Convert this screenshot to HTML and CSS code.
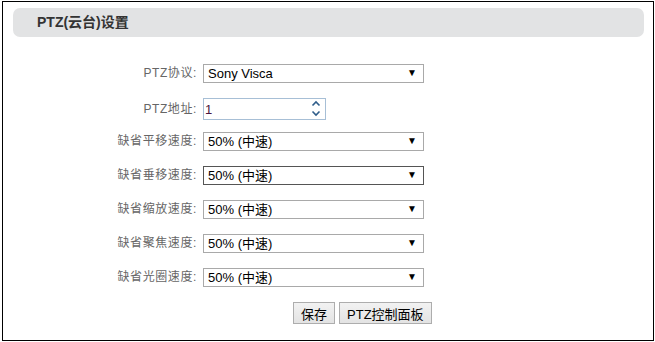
FILE: index.html
```html
<!DOCTYPE html>
<html>
<head>
    <title>PTZ(云台)设置</title>
    <link rel="stylesheet" href="styles.css">
</head>
<body>
    <div class="frame">
        <div class="title-bar">PTZ(云台)设置</div>
        <div class="form">
            <div class="row">
                <label class="label">PTZ协议:</label>
                <div class="select-wrap">
                    <select class="select"><option>Sony Visca</option></select>
                    <span class="arrow">▼</span>
                </div>
            </div>
            <div class="row row-input">
                <label class="label">PTZ地址:</label>
                <div class="spin-wrap">
                    <input class="spin-input" type="text" value="1">
                    <span class="spin">
                        <svg width="10" height="7" viewBox="0 0 10 7"><path d="M1.5 5.5 L5 2 L8.5 5.5" fill="none" stroke="#2f5d8a" stroke-width="1.6"/></svg>
                        <svg width="10" height="7" viewBox="0 0 10 7"><path d="M1.5 1.5 L5 5 L8.5 1.5" fill="none" stroke="#2f5d8a" stroke-width="1.6"/></svg>
                    </span>
                </div>
            </div>
            <div class="row">
                <label class="label">缺省平移速度:</label>
                <div class="select-wrap">
                    <select class="select"><option>50% (中速)</option></select>
                    <span class="arrow">▼</span>
                </div>
            </div>
            <div class="row">
                <label class="label">缺省垂移速度:</label>
                <div class="select-wrap">
                    <select class="select select-focus"><option>50% (中速)</option></select>
                    <span class="arrow">▼</span>
                </div>
            </div>
            <div class="row">
                <label class="label">缺省缩放速度:</label>
                <div class="select-wrap">
                    <select class="select"><option>50% (中速)</option></select>
                    <span class="arrow">▼</span>
                </div>
            </div>
            <div class="row">
                <label class="label">缺省聚焦速度:</label>
                <div class="select-wrap">
                    <select class="select"><option>50% (中速)</option></select>
                    <span class="arrow">▼</span>
                </div>
            </div>
            <div class="row">
                <label class="label">缺省光圈速度:</label>
                <div class="select-wrap">
                    <select class="select"><option>50% (中速)</option></select>
                    <span class="arrow">▼</span>
                </div>
            </div>
            <div class="buttons">
                <button class="button">保存</button>
                <button class="button">PTZ控制面板</button>
            </div>
        </div>
    </div>
</body>
</html>
```

FILE: styles.css
```css
body {
    margin: 0;
    background-color: #fff;
    font-family: "Liberation Sans", "Noto Sans CJK SC", sans-serif;
}
.frame {
    box-sizing: border-box;
    width: 652px;
    height: 340px;
    margin: 1px 0 0 2px;
    border: 1px solid #000;
}
.title-bar {
    height: 29px;
    margin: 6px 9px 0 10px;
    padding-left: 24px;
    line-height: 29px;
    font-size: 14px;
    font-weight: bold;
    color: #333;
    background-color: #e2e3e4;
    border-radius: 7px;
}
.form {
    padding: 27px 0 0 74px;
}
.row {
    display: flex;
    align-items: flex-start;
    height: 34px;
}
.label {
    width: 120px;
    margin-right: 6px;
    text-align: right;
    font-size: 12px;
    letter-spacing: 0.6px;
    line-height: 19px;
    color: #666;
}
.row-input .label {
    line-height: 22px;
}
.select-wrap {
    position: relative;
}
.select {
    box-sizing: border-box;
    width: 221px;
    height: 19px;
    margin: 0;
    padding: 0 0 0 4px;
    appearance: none;
    -webkit-appearance: none;
    border: 1px solid #a9a9a9;
    border-radius: 0;
    background-color: #fff;
    font-family: "Liberation Sans", "Noto Sans CJK SC", sans-serif;
    font-size: 13px;
    color: #000;
}
.select-focus {
    border-color: #555;
}
.arrow {
    position: absolute;
    right: 7px;
    top: 4px;
    font-size: 10px;
    line-height: 10px;
    color: #000;
    pointer-events: none;
}
.spin-wrap {
    position: relative;
}
.spin-input {
    box-sizing: border-box;
    width: 123px;
    height: 22px;
    margin: 0;
    padding: 0 0 0 1px;
    border: 1px solid #a7bfd6;
    font-family: "Liberation Sans", sans-serif;
    font-size: 13px;
    color: #4a1540;
    outline: none;
}
.spin {
    position: absolute;
    right: 5px;
    top: 2px;
    display: flex;
    flex-direction: column;
    gap: 3px;
}
.spin svg {
    display: block;
}
.buttons {
    display: flex;
    gap: 4px;
    margin-left: 216px;
}
.button {
    box-sizing: border-box;
    height: 22px;
    margin: 0;
    padding: 0 7px;
    border: 1px solid #adadad;
    border-radius: 0;
    background: linear-gradient(#f2f2f2, #e3e3e3);
    font-family: "Liberation Sans", "Noto Sans CJK SC", sans-serif;
    font-size: 13px;
    color: #000;
}
```
